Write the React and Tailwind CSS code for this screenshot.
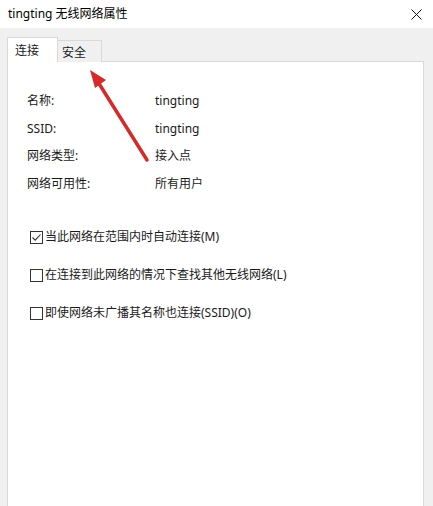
import React from 'react';

const font = { fontFamily: '"Noto Sans", "Noto Sans CJK SC", sans-serif' };

const info = [
  { label: '名称:', value: 'tingting' },
  { label: 'SSID:', value: 'tingting' },
  { label: '网络类型:', value: '接入点' },
  { label: '网络可用性:', value: '所有用户' },
];

const options = [
  { text: '当此网络在范围内时自动连接(M)', checked: true },
  { text: '在连接到此网络的情况下查找其他无线网络(L)', checked: false },
  { text: '即使网络未广播其名称也连接(SSID)(O)', checked: false },
];

const Checkbox = ({ checked }) => (
  <span className="w-[13px] h-[13px] border border-[#333333] bg-white flex items-center justify-center shrink-0">
    {checked && (
      <svg width="11" height="11" viewBox="0 0 11 11">
        <path d="M1.5 5.5 L4.2 8.2 L9.5 2.5" fill="none" stroke="#333" strokeWidth="1.1" />
      </svg>
    )}
  </span>
);

const App = () => {
  return (
    <div className="w-[433px] h-[506px] bg-[#f0f0f0] flex flex-col overflow-hidden relative text-[#1a1a1a]" style={font}>
      {/* Title bar */}
      <div className="h-[28px] bg-white flex items-center justify-between pl-[8px] pr-[11px] shrink-0">
        <span className="text-[12px] text-black">tingting 无线网络属性</span>
        <svg width="11" height="11" viewBox="0 0 11 11">
          <path d="M0.5 0.5 L10.5 10.5 M10.5 0.5 L0.5 10.5" stroke="#111" strokeWidth="1" />
        </svg>
      </div>

      {/* Body */}
      <div className="flex-1 flex flex-col pl-[7px] pr-[9px] pt-[9px]">
        {/* Tabs */}
        <div className="flex items-end h-[25px] relative z-10">
          <div className="h-[25px] w-[51px] bg-white border border-b-0 border-[#d9d9d9] text-[12px] pl-[7px] pt-[4px]">
            连接
          </div>
          <div className="h-[22px] w-[44px] bg-[#f0f0f0] border border-l-0 border-b-0 border-[#d9d9d9] text-[12px] pl-[4px] pt-[3px]">
            安全
          </div>
        </div>

        {/* Panel */}
        <div className="flex-1 bg-white border border-b-0 border-[#d9d9d9] -mt-px pl-[19px] pt-[30px]">
          <div className="flex flex-col gap-[9.5px]">
            {info.map((row) => (
              <div key={row.label} className="flex items-center h-[18px] text-[12px]">
                <span className="w-[128px]">{row.label}</span>
                <span>{row.value}</span>
              </div>
            ))}
          </div>

          <div className="flex flex-col gap-[20px] mt-[35.5px] pl-[3px]">
            {options.map((o) => (
              <div key={o.text} className="flex items-center gap-[2px] h-[18px] text-[12px]">
                <Checkbox checked={o.checked} />
                <span>{o.text}</span>
              </div>
            ))}
          </div>
        </div>
      </div>

      {/* Red annotation arrow */}
      <svg className="absolute left-0 top-0 pointer-events-none" width="433" height="506">
        <line x1="147" y1="160" x2="98" y2="82" stroke="#d42a2a" strokeWidth="3.5" strokeLinecap="round" />
        <polygon points="90,70 106,80 95,88" fill="#d42a2a" />
      </svg>
    </div>
  );
};

export default App;
